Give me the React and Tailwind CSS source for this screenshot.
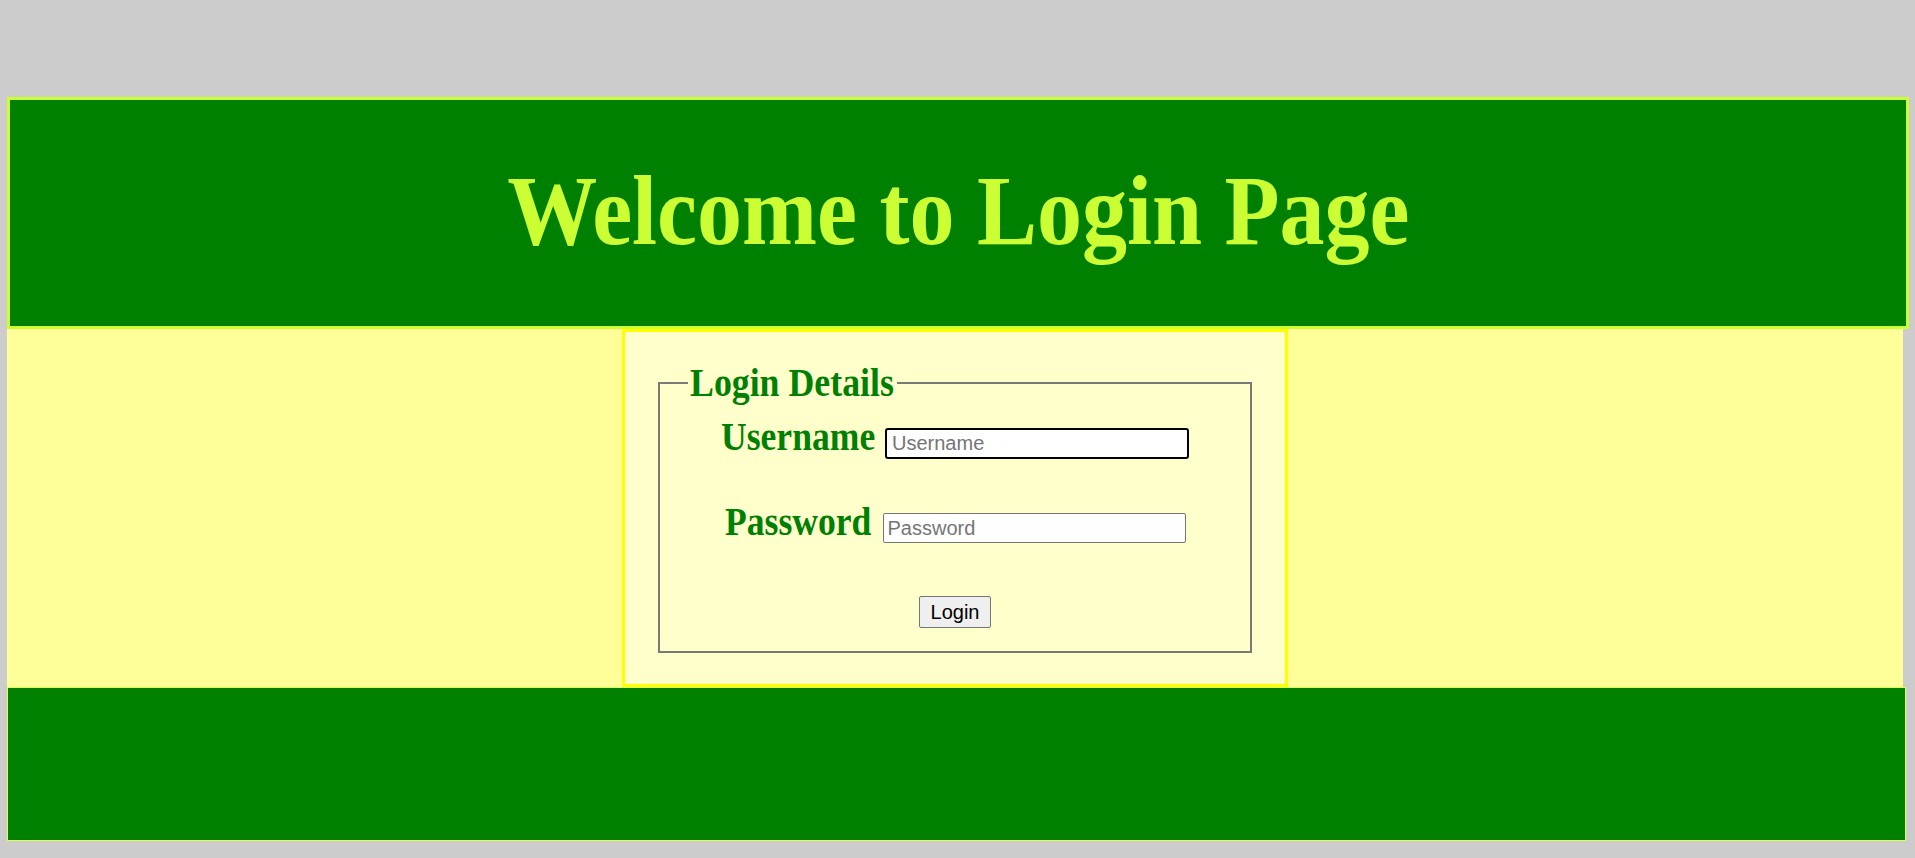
import { useState } from "react";

const serif = "font-['Liberation_Serif','Times_New_Roman',serif] font-bold";
const sans = "font-['Liberation_Sans',Arial,sans-serif]";

function LoginBox() {
    const [username, setUsername] = useState('')
    const [password, setPassword] = useState('')

    const handleLogin = (e) => {
        e.preventDefault();
    }

    return (
        <div className="mx-auto w-[666px] border-[3px] border-[#ffff00] bg-[#ffffcc] px-[33px] pt-[28px] pb-[31px]">
            <form onSubmit={handleLogin}>
                <fieldset className="border-2 border-[#7a7a7a] px-[28px] pt-[9px] pb-[23px]">
                    <legend className={`w-[209px] px-[2px] text-[40px] leading-[46px] text-[#008000] ${serif}`}>
                        <span className="inline-block origin-left scale-x-[0.895] whitespace-nowrap">Login Details</span>
                    </legend>

                    <div className="flex items-baseline justify-center gap-[10px]">
                        <label className={`w-[154px] text-[40px] leading-[44px] text-[#008000] ${serif}`}>
                            <span className="inline-block origin-left scale-x-[0.89] whitespace-nowrap">Username</span>
                        </label>
                        <input
                            value={username}
                            onChange={(e) => setUsername(e.target.value)}
                            type="text"
                            placeholder="Username"
                            className={`h-[31px] w-[304px] rounded-[3px] border-2 border-black bg-white pl-[5px] text-[20px] text-black placeholder:text-[#757575] focus:outline-none ${sans}`}
                        />
                    </div>

                    <div className="mt-[41px] flex items-baseline justify-center gap-[10px]">
                        <label className={`w-[148px] text-[40px] leading-[44px] text-[#008000] ${serif}`}>
                            <span className="inline-block origin-left scale-x-[0.89] whitespace-nowrap">Password</span>
                        </label>
                        <input
                            value={password}
                            onChange={(e) => setPassword(e.target.value)}
                            type="password"
                            placeholder="Password"
                            className={`h-[30px] w-[303px] rounded-[2px] border border-[#767676] bg-white pl-[4px] text-[20px] text-black placeholder:text-[#757575] focus:outline-none ${sans}`}
                        />
                    </div>

                    <div className="mt-[52px] flex justify-center">
                        <button
                            type="submit"
                            className={`h-[32px] w-[72px] rounded-[2px] border border-[#767676] bg-[#efefef] text-[20px] text-black hover:bg-[#e5e5e5] ${sans}`}
                        >
                            Login
                        </button>
                    </div>
                </fieldset>
            </form>
        </div>
    );
}

export default function App() {
    return (
        <div className="min-h-screen bg-[#cccccc] pt-[97px] pl-[7px] pb-[18px]">
            <header className="flex h-[232px] w-[1902px] items-center justify-center border-[3px] border-[#ccff33] bg-[#008000] pb-[6px]">
                <h1 className={`inline-block origin-center scale-x-[0.9] whitespace-nowrap text-[100px] leading-[111px] text-[#ccff33] ${serif}`}>
                    Welcome to Login Page
                </h1>
            </header>

            <main className="w-[1896px] bg-[#ffff99]">
                <LoginBox />
            </main>

            <footer className="h-[154px] w-[1899px] border border-[#ddff55] bg-[#008000]"></footer>
        </div>
    );
}
